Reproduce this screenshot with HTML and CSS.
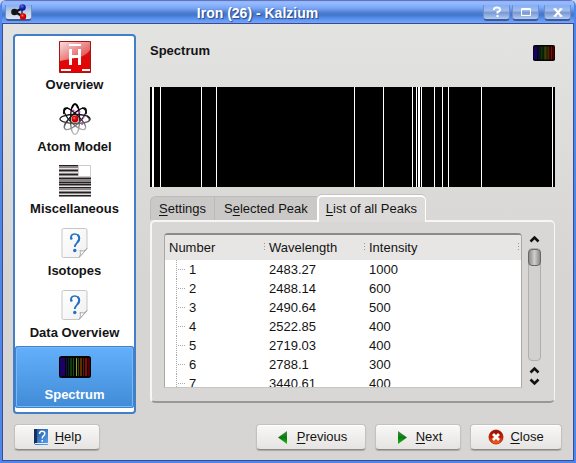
FILE: index.html
```html
<!DOCTYPE html>
<html lang="en">
<head>
<meta charset="utf-8">
<title>Iron (26) - Kalzium</title>
<link rel="stylesheet" href="styles.css">
</head>
<body>
<svg width="0" height="0" class="defs" aria-hidden="true">
  <defs>
    <linearGradient id="red" x1="0" y1="0" x2="0" y2="1"><stop offset="0" stop-color="#d01818"/><stop offset="1" stop-color="#e80000"/></linearGradient>
    <linearGradient id="gloss" x1="0" y1="0" x2="1" y2="1"><stop offset="0" stop-color="#fff" stop-opacity=".85"/><stop offset="1" stop-color="#fff" stop-opacity=".15"/></linearGradient>
    <linearGradient id="sheet" x1="0" y1="0" x2="1" y2="1"><stop offset="0" stop-color="#fff"/><stop offset="1" stop-color="#f0f0f0"/></linearGradient>
    <linearGradient id="green" x1="0" y1="0" x2="0" y2="1"><stop offset="0" stop-color="#4a8a4a"/><stop offset=".5" stop-color="#0c7a10"/><stop offset="1" stop-color="#10c010"/></linearGradient>
    <linearGradient id="orange" x1="0" y1="0" x2="0" y2="1"><stop offset="0" stop-color="#8e1004"/><stop offset=".5" stop-color="#c81c00"/><stop offset="1" stop-color="#ff6a20"/></linearGradient>
    <linearGradient id="book" x1="0" y1="0" x2="1" y2="1"><stop offset="0" stop-color="#1c4f9c"/><stop offset="1" stop-color="#5aa4f0"/></linearGradient>
    <linearGradient id="orbit" gradientUnits="userSpaceOnUse" x1="14" y1="4" x2="18" y2="32"><stop offset="0" stop-color="#000"/><stop offset=".45" stop-color="#222"/><stop offset=".8" stop-color="#aaa"/><stop offset="1" stop-color="#c4c4c4"/></linearGradient>
    <radialGradient id="ball" cx=".4" cy=".35"><stop offset="0" stop-color="#ff9a8a"/><stop offset=".4" stop-color="#f01010"/><stop offset="1" stop-color="#c00000"/></radialGradient>
    <radialGradient id="blueball" cx=".4" cy=".3"><stop offset="0" stop-color="#5a6af0"/><stop offset="1" stop-color="#0c1490"/></radialGradient>
    <symbol id="spectrum-icon" viewBox="0 0 32 22" preserveAspectRatio="none">
      <rect width="32" height="22" rx="2.5" fill="#050505"/>
      <path fill="#1c0068" d="M1 2h5v18H1z"/><path fill="#10104a" d="M7 2h1v18H7z"/>
      <path fill="#062626" d="M9 2h1v18H9z"/><path fill="#0c3a10" d="M11 2h2v18h-2z"/><path fill="#1c5204" d="M14 2h1v18h-1z"/>
      <path fill="#8aa018" d="M17 2h1v18h-1z"/><path fill="#403c04" d="M19 2h1v18h-1z"/><path fill="#5a3000" d="M21 2h2v18h-2z"/><path fill="#522000" d="M24 2h1v18h-1z"/>
      <path fill="#900404" d="M26 2h2v18h-2z"/><path fill="#4c0000" d="M29 2h2v18h-2z"/>
    </symbol>
    <symbol id="unknown-icon" viewBox="0 0 32 32">
      <path d="M4.500 1.500h22a1.500 1.500 0 0 1 1.500 1.500v19l-8 8.500H4.500A1.500 1.500 0 0 1 3 29V3a1.500 1.500 0 0 1 1.500-1.500z" fill="url(#sheet)" stroke="#c6c6c6"/>
      <path d="M20 30.500c1.500-2 1.800-4 1-7 2.500 1 5 .5 7-2z" fill="#fff" stroke="#a8a8a8"/>
      <path d="M12 12c-.6-3 1-5 3.600-5 3 0 4.800 2 4.800 4.400 0 3.800-4.600 4.600-4.600 8.600" fill="none" stroke="#2470c4" stroke-width="1.700"/>
      <path d="M18.500 7.700c2.200 1.800 2.300 5-.2 7.600" fill="none" stroke="#2470c4" stroke-width="2"/>
      <circle cx="12.300" cy="11.500" r="1.300" fill="#2470c4"/><circle cx="15.800" cy="23.500" r="1.700" fill="#2470c4"/>
    </symbol>
  </defs>
</svg>
<div class="window">
  <header class="titlebar">
    <button class="tb-btn app" type="button" aria-label="Window menu">
      <svg width="18" height="16" viewBox="0 0 18 16"><path d="M5 8l8-4M5 8l8 4.500" stroke="#111" stroke-width="2.500"/><circle cx="4.500" cy="8" r="3.300" fill="#141414"/><path d="M12 4v8" stroke="#333" stroke-width="1.500"/><circle cx="12.500" cy="3.500" r="3.200" fill="url(#blueball)"/><circle cx="13" cy="12.500" r="3.200" fill="url(#ball)"/></svg>
    </button>
    <h1 class="caption">Iron (26) - Kalzium</h1>
    <div class="tb-group">
      <button class="tb-btn" type="button" aria-label="Help"><svg width="12" height="12" viewBox="0 0 12 12"><path d="M3 4V3q0-1.500 3-1.500T9 3.500 6.500 6v1.500M6.500 9v2" fill="none" stroke="#fff" stroke-width="2"/></svg></button>
      <button class="tb-btn" type="button" aria-label="Maximize"><svg width="12" height="12" viewBox="0 0 12 12"><path d="M1.500 2.500h9v7h-9zM1 3.500h10" fill="none" stroke="#fff"/></svg></button>
    </div>
    <button class="tb-btn" type="button" aria-label="Close window"><svg width="12" height="12" viewBox="0 0 12 12"><path d="M1.500 3h3M7.500 3h3M1.500 10h3M7.500 10h3" stroke="#fff" stroke-width="1.500"/><path d="M3 3l6 7M9 3l-6 7" stroke="#fff" stroke-width="2"/></svg></button>
  </header>
  <div class="content">
    <nav class="sidebar">
      <button class="page" type="button">
        <svg width="32" height="32" viewBox="0 0 32 32"><path d="M.5.500h31v31H.500z" fill="url(#red)" stroke="#a81414"/><path d="M1 1h30v8C25 18 14 17 1 20z" fill="url(#gloss)"/><path d="M11.500 8v16M20.500 8v16M11.500 15.500h9" stroke="#fff" stroke-width="3"/><path d="M10 4h12M2 29h10M23 29h8" stroke="#fff" stroke-width="2"/></svg>
        <span>Overview</span>
      </button>
      <button class="page" type="button">
        <svg width="32" height="32" viewBox="0 0 32 32"><g fill="none" stroke="url(#orbit)" stroke-width="1.300"><path d="M1 16c0-2.500 6-4.500 15-4.500S31 13 31 16s-7 4.500-15 4.500S1 18.500 1 16z"/><path d="M16 1c3 0 4.500 7 4.500 15S19 31.500 16 31.500 11.500 24 11.500 16 13 1 16 1z"/><path d="M5.500 5.500c2-2 8 2 13.500 7.500s9 11 7 13-8-1-13.500-6.500S3.500 7.500 5.500 5.500z"/><path d="M26.500 5.500c2 2-1 8.500-6.500 14S8 28 6 26s1-7.500 6.500-13 12-9.500 14-7.500z"/><path d="M13 5c2-5 4-5 6 0M5 11q-1-5 4-6M27 11q1-5-4-6M28 13q3 2 2.500 4" stroke-width="1.700"/></g><circle cx="16" cy="16" r="3.400" fill="url(#ball)"/><g fill="#f020e8"><circle cx="14.500" cy="7.500" r="1"/><circle cx="20.500" cy="9" r="1"/><circle cx="24.500" cy="14.500" r="1"/><circle cx="23" cy="21" r="1"/></g></svg>
        <span>Atom Model</span>
      </button>
      <button class="page" type="button">
        <svg width="32" height="32" viewBox="0 0 32 32" shape-rendering="crispEdges"><path fill="#8c8588" d="M0 0h32v32H0z"/><path d="M0 .5h32M0 5.500h32M0 9.500h32M0 13.500h32M0 17.500h32M0 19.500h32M0 22.500h32M0 27.500h32M0 30.500h32" stroke="#222"/><path d="M0 3.500h32M0 7.500h32M0 11.500h32M0 21.500h32M0 25.500h32M0 29.500h32" stroke="#e4e0e2"/><path d="M19.500.500h12v11h-12z" fill="#fff" stroke="#ccc"/></svg>
        <span>Miscellaneous</span>
      </button>
      <button class="page" type="button"><svg width="32" height="32"><use href="#unknown-icon"/></svg><span>Isotopes</span></button>
      <button class="page" type="button"><svg width="32" height="32"><use href="#unknown-icon"/></svg><span>Data Overview</span></button>
      <button class="page selected" type="button" aria-current="page"><svg width="32" height="32"><use href="#spectrum-icon" y="5" width="32" height="22"/></svg><span>Spectrum</span></button>
    </nav>
    <main class="main">
      <div class="heading"><h2>Spectrum</h2><svg width="22" height="16"><use href="#spectrum-icon" width="22" height="16"/></svg></div>
      <svg class="spectrum" viewBox="0 0 405 100" preserveAspectRatio="none" shape-rendering="crispEdges" role="img" aria-label="Emission spectrum"><path d="M0 0h405v100H0z"/><path fill="#fff" d="M2 0h2v100h-2zM10 0h1v100h-1zM51 0h1v100h-1zM66 0h1v100h-1zM204 0h1v100h-1zM233 0h1v100h-1zM262 0h1v100h-1zM266 0h1v100h-1zM268 0h2v100h-2zM271 0h1v100h-1zM284 0h1v100h-1zM292 0h1v100h-1zM298 0h1v100h-1zM331 0h1v100h-1zM402 0h1v100h-1z"/></svg>
      <div class="tabs" role="tablist">
        <button class="tab first" type="button" role="tab"><u>S</u>ettings</button>
        <button class="tab" type="button" role="tab">S<u>e</u>lected Peak</button>
        <button class="tab active" type="button" role="tab" aria-selected="true"><u>L</u>ist of all Peaks</button>
      </div>
      <section class="panel">
        <div class="tree">
          <table>
            <colgroup><col class="c1"><col class="c2"><col></colgroup>
            <thead><tr><th>Number</th><th>Wavelength</th><th>Intensity</th></tr></thead>
            <tbody>
              <tr><td>1</td><td>2483.27</td><td>1000</td></tr>
              <tr><td>2</td><td>2488.14</td><td>600</td></tr>
              <tr><td>3</td><td>2490.64</td><td>500</td></tr>
              <tr><td>4</td><td>2522.85</td><td>400</td></tr>
              <tr><td>5</td><td>2719.03</td><td>400</td></tr>
              <tr><td>6</td><td>2788.1</td><td>300</td></tr>
              <tr><td>7</td><td>3440.61</td><td>400</td></tr>
            </tbody>
          </table>
        </div>
        <div class="scroll">
          <button type="button" aria-label="Scroll up"><svg width="11" height="8" viewBox="0 0 11 8"><path d="M1.500 6.500l4-4 4 4" fill="none" stroke="#111" stroke-width="2.500"/></svg></button>
          <div class="track"><div class="thumb"></div></div>
          <button type="button" aria-label="Scroll up"><svg width="11" height="8" viewBox="0 0 11 8"><path d="M1.500 6.500l4-4 4 4" fill="none" stroke="#111" stroke-width="2.500"/></svg></button>
          <button type="button" aria-label="Scroll down"><svg width="11" height="8" viewBox="0 0 11 8"><path d="M1.500 1.500l4 4 4-4" fill="none" stroke="#111" stroke-width="2.500"/></svg></button>
        </div>
      </section>
    </main>
  </div>
  <footer class="actions">
    <button class="btn help" type="button"><svg width="16" height="16" viewBox="0 0 16 16"><path d="M1 0h14v16H2.500L1 14.500z" fill="url(#book)"/><path d="M1 0h3v14H1z" fill="#14305c"/><path d="M2 14.500h13" stroke="#eee"/><path d="M6.500 5c0-2 1-2.800 2.500-2.800 3.500 0 3.500 3.300 1.200 4.800Q9.300 7.800 9.300 9.500M9.300 11v1.800" fill="none" stroke="#fff" stroke-width="1.500"/></svg><span><u>H</u>elp</span></button>
    <button class="btn wide" type="button"><svg width="16" height="16" viewBox="0 0 16 16"><path d="M12 2v13L3 8.500z" fill="url(#green)"/></svg><span><u>P</u>revious</span></button>
    <button class="btn" type="button"><svg width="16" height="16" viewBox="0 0 16 16"><path d="M4 2v13l9-6.500z" fill="url(#green)"/></svg><span><u>N</u>ext</span></button>
    <button class="btn close" type="button"><svg width="16" height="16" viewBox="0 0 16 16"><circle cx="8" cy="8" r="7" fill="url(#orange)" stroke="#a01000" stroke-width=".8"/><path d="M5 5l6 6M11 5l-6 6" stroke="#fff" stroke-width="2.800"/></svg><span><u>C</u>lose</span></button>
  </footer>
</div>
</body>
</html>
```
FILE: styles.css
```css
* { box-sizing: border-box; }
body { margin: 0; background: #d8d4e0; font: 13px/16px "Liberation Sans", Arial, sans-serif; color: #141414; }
button { font: inherit; color: inherit; padding: 0; border: 0; background: none; }
svg { display: block; flex: none; }
.defs { position: absolute; }
u { text-underline-offset: 2px; text-decoration-thickness: 1px; text-decoration-skip-ink: none; }

.window {
  display: flex; flex-direction: column; height: 100vh; overflow: hidden;
  border: solid #4f86ec; border-width: 0 2px 2px; border-radius: 6px 6px 0 0;
  background: linear-gradient(#e4e4e3, #d6d5d3 60%);
}
.titlebar {
  flex: none; display: flex; align-items: flex-start; height: 24px; padding: 4px 4px 0; margin: 0 -1px;
  border-top: 1px solid #6a70b8; border-bottom: 1px solid #3a4a8c;
  background: linear-gradient(#8cb4fc 0, #94bcff 2px, #7ba6f4 7px, #4a7cd0 12px, #4576cc 14px, #5c92f0 18px, #74a6fa 22px);
}
.caption { flex: 1; margin: 0 24px 0 0; padding-left: 24px; font-size: 14px; line-height: 16px; text-align: center; color: #fff; text-shadow: 1px 1px 1px #27478c; }
.tb-btn {
  display: flex; align-items: center; justify-content: center; width: 27px; height: 16px;
  border: 1px solid #6d8fca; border-top: 0; border-bottom: 2px solid #3a5a9c; border-radius: 0 0 4px 4px;
  background: linear-gradient(#86aef2, #9fbcee 40%, #7898d4 55%, #b4cbee);
}
.tb-btn.app { background: linear-gradient(#86aef2, #c0d0e8 50%, #dde5f0); }
.tb-group { display: flex; gap: 2px; margin-right: 5px; }

.content {
  flex: 1; min-height: 0; display: flex; gap: 14px; padding: 10px 18px 10px 10px;
  border: solid #3c4c90; border-width: 0 1px;
}
.sidebar { flex: none; width: 123px; padding-bottom: 4px; border: 2px solid #4180c8; border-radius: 4px; background: #fff; }
.page { display: flex; flex-direction: column; align-items: center; gap: 4px; width: 100%; height: 62px; padding-top: 5px; font-weight: bold; }
.page.selected {
  color: #fff; border-radius: 3px; background: linear-gradient(#64b0fc, #418bd6);
  box-shadow: inset 0 0 0 1px #3f83cc, inset 0 0 0 2px #7ab8f4;
}
.main { flex: 1; min-width: 0; display: flex; flex-direction: column; padding-bottom: 11px; }
.heading { display: flex; align-items: center; justify-content: space-between; height: 38px; margin-bottom: 15px; }
.heading h2 { margin: 0 0 4px; font-size: 13px; line-height: 16px; }
.spectrum { width: 100%; height: 100px; }

.tabs { display: flex; align-items: flex-end; height: 33px; z-index: 1; }
.tab { height: 24px; padding: 0 9px; border: 1px solid #bdbbb8; border-width: 1px 0 0 1px; background: #cbc9c7; }
.tab.first { border-radius: 6px 0 0 0; padding: 0 8px; }
.tab.active { height: 27px; margin-bottom: -2px; padding: 0 8px 1px 7px; border: 2px solid #fff; border-width: 2px 1px 0 2px; border-radius: 5px 5px 0 0; background: #dcdbd9; box-shadow: 0 -1px #c4c2c0; }
.panel {
  flex: 1; min-height: 0; display: flex; gap: 6px; padding: 11px 13px 13px 12px;
  border: 2px solid #f6f6f5; border-right-width: 1px; border-bottom: 2px solid #9a9896; border-radius: 5px; background: #d8d7d5;
}
.tree { flex: 1; min-width: 0; overflow: hidden; border: 1px solid #aaa8a6; border-top: 2px solid #8c8a88; border-bottom-color: #c8c6c4; border-radius: 4px 4px 0 0; background: #fff; }
table { width: 100%; table-layout: fixed; border-spacing: 0; }
.c1, .c2 { width: 100px; }
th {
  height: 25px; padding: 0 4px; text-align: left; font-weight: normal;
  background: repeating-linear-gradient(#999 0 1px, transparent 1px 3px) right 0 center / 1px 9px no-repeat, #e7e6e4;
}
th:last-child { background-position: right 2px center, 0 0; }
td { height: 19px; padding: 0 4px; }
td:first-child {
  padding-left: 24px;
  background:
    repeating-linear-gradient(#a8a8a8 0 1px, #fff 1px 2px) 11px 0 / 1px 100% no-repeat,
    repeating-linear-gradient(90deg, #a8a8a8 0 1px, #fff 1px 2px) 11px 9px / 9px 1px no-repeat;
}
.scroll { display: flex; flex-direction: column; align-items: center; width: 13px; }
.scroll button { flex: none; display: flex; align-items: center; height: 12px; }
.track { flex: 1; width: 13px; margin: 3px 0; border: 1px solid #b0aeac; border-radius: 4px; background: #d2d1cf; }
.thumb { height: 17px; margin: 0 -1px; border: 1px solid #686664; border-radius: 4px; background: linear-gradient(90deg, #8c8a88, #d0cecc 50%, #8c8a88); }

.actions { flex: none; display: flex; gap: 9px; padding: 0 11px 10px; border: 1px solid #3c4c90; border-top: 0; }
.btn {
  display: flex; align-items: center; justify-content: center; gap: 6px; min-width: 86px; height: 26px;
  border: 1px solid #c4c2c0; border-bottom-color: #8c8a88; border-radius: 4px;
  background: linear-gradient(#f8f8f7, #e5e4e2); box-shadow: 0 1px 1px #aaa8a6, inset 0 1px #fff;
}
.help { margin-right: auto; }
.wide { min-width: 110px; }
.close { min-width: 92px; }
```
